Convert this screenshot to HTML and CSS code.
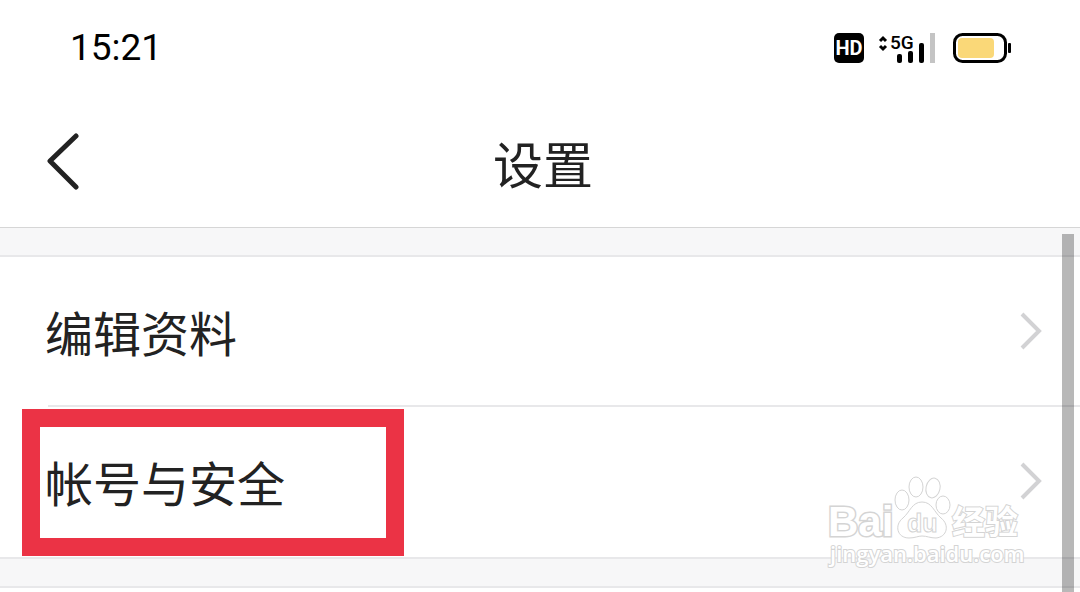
FILE: index.html
```html
<!DOCTYPE html>
<html lang="zh-CN">

<head>
    <meta charset="UTF-8">
    <meta name="viewport" content="width=device-width, initial-scale=1">
    <title>设置</title>
    <link rel="stylesheet" href="styles.css">
</head>

<body>
    <div class="page">
        <div class="statusbar">
            <span class="time">15:21</span>
            <div class="status-icons">
                <span class="hd">HD</span>
                <svg class="signal" width="58" height="32" viewBox="0 0 58 32">
                    <path d="M2 9 L5 6 L8 9 M2 14 L5 17 L8 14" fill="none" stroke="#000" stroke-width="3" />
                    <text class="network" x="12" y="17">5G</text>
                    <rect x="19" y="22" width="5" height="9" rx="2" />
                    <rect x="30" y="19" width="5" height="12" rx="2" />
                    <rect x="41" y="11" width="5" height="20" rx="2" />
                    <rect x="52" y="1" width="5" height="30" fill="#c4c4c4" />
                </svg>
                <svg class="battery" width="60" height="32" viewBox="0 0 60 32">
                    <rect x="2.5" y="2.5" width="51" height="27" rx="8" fill="#fff" stroke="#000" stroke-width="3" />
                    <rect x="6" y="6" width="36" height="20" rx="4" fill="#fad878" />
                    <rect x="56" y="11" width="3" height="10" rx="1" />
                </svg>
            </div>
        </div>

        <header class="header">
            <button class="back" type="button" aria-label="返回">
                <svg width="34" height="58" viewBox="0 0 34 58">
                    <path d="M30 3 L4 28 L30 54" fill="none" stroke="#222" stroke-width="5" stroke-linecap="round" stroke-linejoin="round" />
                </svg>
            </button>
            <h1>设置</h1>
        </header>

        <main class="content">
            <nav class="group">
                <a class="row" href="#profile">
                    <span>编辑资料</span>
                    <svg class="arrow" width="24" height="40" viewBox="0 0 24 40">
                        <path d="M2 3 L19 20 L2 37" />
                    </svg>
                </a>
                <a class="row marked" href="#security">
                    <span>帐号与安全</span>
                    <svg class="arrow" width="24" height="40" viewBox="0 0 24 40">
                        <path d="M2 3 L19 20 L2 37" />
                    </svg>
                </a>
            </nav>
            <div class="group next"></div>

            <svg class="watermark" width="200" height="96" viewBox="0 0 200 96">
                <text class="brand" x="2" y="62">Bai</text>
                <ellipse cx="76" cy="26" rx="7" ry="10" />
                <ellipse cx="90" cy="13" rx="7" ry="10" />
                <ellipse cx="107" cy="14" rx="7" ry="10" transform="rotate(12 107 14)" />
                <ellipse cx="117" cy="31" rx="7" ry="9" />
                <path d="M96 28 C86 28 84 38 77 44 C68 51 71 64 83 64 C89 64 92 62 96 62 C101 62 104 64 110 64 C121 63 124 51 115 44 C108 38 106 28 96 28 Z" />
                <text class="du" x="81" y="58">du</text>
                <text class="exp" x="126" y="60">经验</text>
                <text class="site" x="4" y="88">jingyan.baidu.com</text>
            </svg>
            <div class="scrollbar"></div>
        </main>
    </div>
</body>

</html>
```

FILE: styles.css
```css
* {
    box-sizing: border-box;
}

body {
    margin: 0;
    background-color: #fff;
    color: #222;
    font-family: "Noto Sans CJK SC", sans-serif;
}

.page {
    display: flex;
    flex-direction: column;
    min-height: 100vh;
    overflow: hidden;
}

.statusbar {
    display: flex;
    justify-content: space-between;
    align-items: center;
    height: 96px;
    padding: 0 68px 0 70px;
    color: #000;
}

.time {
    font-family: Roboto, sans-serif;
    font-size: 37px;
    line-height: 48px;
}

.status-icons {
    display: flex;
    align-items: center;
    gap: 16px;
}

.hd {
    width: 30px;
    height: 30px;
    margin-right: -2px;
    border-radius: 5px;
    background-color: #000;
    color: #fff;
    font-family: Roboto, sans-serif;
    font-size: 20px;
    font-weight: bold;
    line-height: 30px;
    text-align: center;
}

.network {
    font-family: Roboto, sans-serif;
    font-size: 19px;
    font-weight: 500;
}

.header {
    display: grid;
    grid-template-columns: 80px 1fr 80px;
    align-items: center;
    height: 132px;
    border-bottom: 1px solid #d6d6d6;
}

.back {
    display: flex;
    justify-content: flex-end;
    padding: 0;
    border: none;
    background: none;
    cursor: pointer;
}

h1 {
    margin: 0;
    padding: 0 0 0 6px;
    font-size: 50px;
    font-weight: normal;
    line-height: 72px;
    text-align: center;
}

.content {
    position: relative;
    flex: 1;
    padding-top: 27px;
    background-color: #f7f7f8;
}

.group {
    border-top: 2px solid #e8e8ea;
    border-bottom: 2px solid #e8e8ea;
    background-color: #fff;
}

.next {
    height: 60px;
    margin-top: 27px;
    margin-bottom: -60px;
}

.row {
    position: relative;
    display: flex;
    justify-content: space-between;
    align-items: center;
    height: 150px;
    padding: 0 36px 2px 45px;
    color: #222;
    font-size: 48px;
    line-height: 72px;
    text-decoration: none;
}

.row + .row::before {
    content: "";
    position: absolute;
    top: -2px;
    left: 48px;
    right: 0;
    height: 2px;
    background-color: #e8e8ea;
}

/* red frame round the entry to tap */
.marked::after {
    content: "";
    position: absolute;
    top: 2px;
    left: 22px;
    box-sizing: border-box;
    width: 382px;
    height: 147px;
    border: 18px solid #eb3345;
}

.arrow path {
    fill: none;
    stroke: #d2d2d4;
    stroke-width: 4;
}

.watermark {
    position: absolute;
    top: 246px;
    right: 54px;
    fill: #fff;
    stroke: #d4d4d4;
    stroke-width: 1;
}

.brand,
.du {
    font-family: "Liberation Sans", sans-serif;
    font-weight: bold;
}

.brand {
    font-size: 42px;
    stroke-width: 3;
    paint-order: stroke;
}

.du {
    font-size: 25px;
}

.exp {
    font-family: "Noto Sans CJK SC", sans-serif;
    font-size: 33px;
    font-weight: bold;
    stroke-width: 2;
    paint-order: stroke;
}

.site {
    font-family: "Open Sans", sans-serif;
    font-size: 22px;
    font-weight: 600;
    stroke-width: 2;
    paint-order: stroke;
}

.scrollbar {
    position: absolute;
    top: 6px;
    right: 6px;
    bottom: 0;
    width: 12px;
    background-color: rgba(0, 0, 0, 0.28);
}
```
